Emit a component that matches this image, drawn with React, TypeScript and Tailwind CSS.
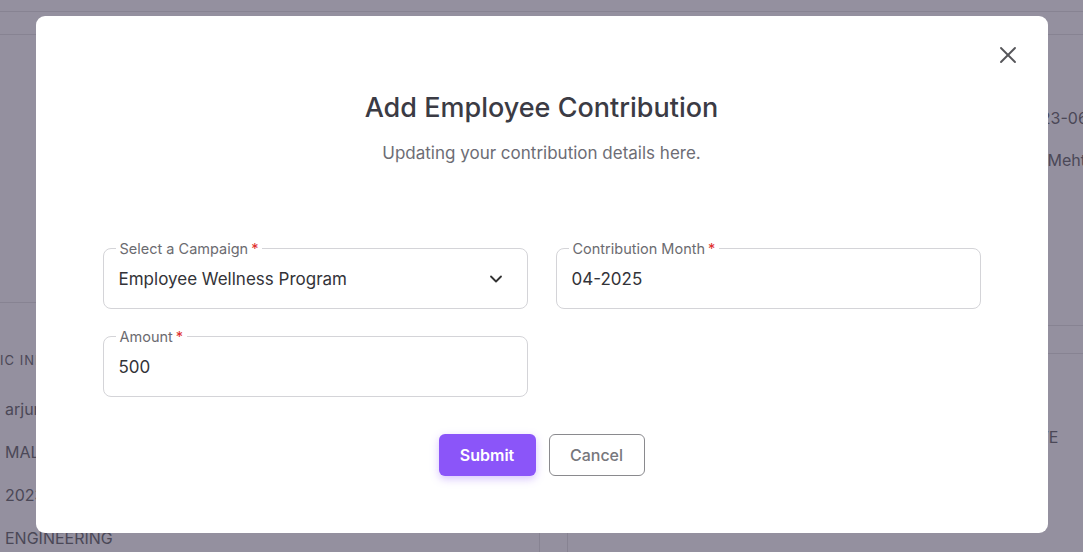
import React from "react";
import { X, ChevronDown } from "lucide-react";

function Field({ label, value, select }: { label: string; value: string; select?: boolean }) {
  return (
    <div className="relative h-[61px] rounded-[8px] border border-[#d4d4d8] flex items-center pl-[15px] pr-[21px]">
      <div className="absolute left-[12px] top-[-10px] bg-white px-[4px] text-[14.5px] leading-[20px] text-[#6b6b70]">
        {label}
        <span className="text-[#e0302f] ml-[3px]">*</span>
      </div>
      <div className="flex-1 text-[17px] leading-[24px] text-[#333338]">{value}</div>
      {select && <ChevronDown size={20} strokeWidth={2.2} className="text-[#333]" />}
    </div>
  );
}

export default function App() {
  return (
    <div className="relative w-[1083px] h-[552px] overflow-hidden bg-[#94909f] text-[#4b4857]" style={{ fontFamily: "Inter, 'Noto Sans', sans-serif" }}>
      {/* dimmed background page */}
      <div className="h-[12px] border-b border-[#878392]" />
      <div className="h-[23px] border-b border-[#878392]" />
      <div className="flex h-[517px]">
        <div className="w-[540px] shrink-0 border-r border-[#878392] flex flex-col overflow-hidden">
          <div className="h-[268px] shrink-0 border-b border-[#878392]" />
          <div className="ml-[-29px] mt-[48px] text-[13px] tracking-[0.08em] leading-[18px] whitespace-nowrap">BASIC INFORMATION</div>
          <div className="pl-[5px] flex flex-col gap-[19px] mt-[28px] text-[16px] leading-[24px] whitespace-nowrap">
            <div>arjun.sharma</div>
            <div>MALE</div>
            <div>2023-06-15</div>
            <div>ENGINEERING</div>
          </div>
        </div>
        <div className="w-[27px] shrink-0" />
        <div className="flex-1 min-w-0 overflow-hidden border-l border-[#878392] flex flex-col whitespace-nowrap">
          <div className="h-[291px] shrink-0 border-b border-[#878392] flex flex-col">
            <div className="pl-[453px] mt-[71px] text-[16px] leading-[24px]">2023-06-15</div>
            <div className="pl-[433px] mt-[18px] text-[16px] leading-[24px]">Rahul Mehta</div>
          </div>
          <div className="h-[28px] shrink-0 border-b border-[#878392]" />
          <div className="pl-[433px] mt-[71px] text-[16px] leading-[24px]">ACTIVE</div>
        </div>
      </div>

      {/* modal overlay */}
      <div className="absolute inset-0 flex justify-center pt-[16px]">
        <div className="relative w-[1012px] h-[517px] bg-white rounded-[9px] flex flex-col items-center">
          <button className="absolute right-[26px] top-[25px] text-[#555559]">
            <X size={28} strokeWidth={1.6} />
          </button>
          <h2 className="mt-[76px] text-[27px] leading-[32px] font-medium text-[#3b3b44]">Add Employee Contribution</h2>
          <p className="mt-[17px] text-[17px] leading-[24px] text-[#6d6d75]">Updating your contribution details here.</p>
          <div className="mt-[83px] w-full px-[67px] grid grid-cols-2 gap-x-[28px] gap-y-[27px]">
            <Field label="Select a Campaign" value="Employee Wellness Program" select />
            <Field label="Contribution Month" value="04-2025" />
            <Field label="Amount" value="500" />
          </div>
          <div className="mt-[37px] flex gap-[13px]">
            <button className="w-[97px] h-[42px] rounded-[6px] bg-[#8b55f9] text-white text-[16px] font-semibold shadow-[0_3px_8px_rgba(139,85,249,0.35)]">Submit</button>
            <button className="w-[96px] h-[42px] rounded-[6px] border border-[#8a8a8e] text-[#77777c] text-[16px] font-medium">Cancel</button>
          </div>
        </div>
      </div>
    </div>
  );
}
